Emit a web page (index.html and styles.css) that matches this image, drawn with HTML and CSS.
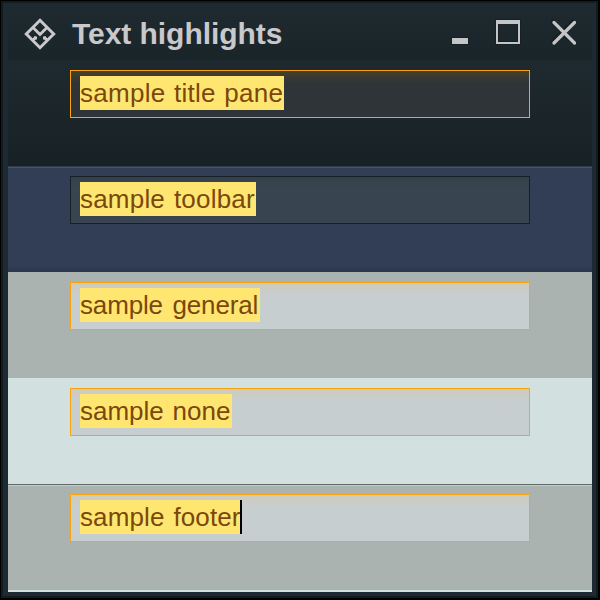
FILE: index.html
```html
<!DOCTYPE html>
<html lang="en">
<head>
<meta charset="utf-8">
<title>Text highlights</title>
<link rel="stylesheet" href="styles.css">
</head>
<body>
<div class="window">
  <div class="frame">
    <header class="titlebar">
      <svg class="logo" width="32" height="32" viewBox="0 0 32 32">
        <path d="M16 2.300 29.700 16 16 29.700 2.300 16Z" fill="none" stroke="#c9c9cb" stroke-width="3"/>
        <path d="M9 9.500 16 16.500 23 9.500M8 23l4-4M24 23l-4-4" fill="none" stroke="#c9c9cb" stroke-width="2.800"/>
        <path d="M10 18.500h3v3h-3zM19 18.500h3v3h-3z" fill="#c9c9cb"/>
      </svg>
      <h1 class="title">Text highlights</h1>
      <svg class="controls" width="128" height="32" viewBox="0 0 128 32">
        <path d="M3 19h18v8H3zM47 1h26v26H47zM51 5v18h18V5z" fill="#141a1d" fill-rule="evenodd" opacity=".6"/>
        <path d="m105 4 20 20M125 4l-20 20" fill="none" stroke="#141a1d" stroke-width="5" stroke-linecap="round" opacity=".6"/>
        <path d="M4 20h16v6H4z" fill="#c4c5c7"/>
        <path d="M48 2h24v24H48zM50 6v18h20V6z" fill="#c4c5c7" fill-rule="evenodd"/>
        <path d="m106 4.500 20.500 20.500M126.500 4.500 106 25" fill="none" stroke="#c4c5c7" stroke-width="3.200" stroke-linecap="round"/>
      </svg>
    </header>
    <section class="pane pane-title"><div class="field"><span class="mark w-title">sample title pane</span></div></section>
    <section class="pane pane-toolbar"><div class="field field-dark"><span class="mark w-toolbar">sample toolbar</span></div></section>
    <section class="pane pane-general"><div class="field"><span class="mark w-general">sample general</span></div></section>
    <section class="pane pane-none"><div class="field"><span class="mark w-none">sample none</span></div></section>
    <section class="pane pane-footer"><div class="field"><span class="mark w-footer">sample footer</span><span class="caret"></span></div></section>
  </div>
</div>
</body>
</html>
```
FILE: styles.css
```css
* { box-sizing: border-box; }
body { margin: 0; font-family: "Liberation Sans", Arial, sans-serif; }
.window {
  width: 600px;
  height: 600px;
  padding: 1px 2px 2px 1px;
  background: #000;
}
.frame {
  height: 597px;
  border: 2px solid #121d21;
  padding: 5px 4px 4px 5px;
  background: #1e2a31;
}
.titlebar {
  display: flex;
  height: 52px;
  padding: 10px 16px 0 16px;
  background: linear-gradient(#1f2a30, #1a252a);
}
.logo { flex: none; }
.title {
  margin: 0 0 0 16px;
  font-size: 30px;
  line-height: 32px;
  letter-spacing: -0.05px;
  white-space: nowrap;
  color: #c9c9cb;
}
.controls { margin-left: auto; }
.pane { height: 106px; padding: 10px 62px 0; }
.pane-title { background: linear-gradient(#1f2a30, #172125); }
.pane-toolbar {
  border-top: 1px solid #303c4d;
  padding-top: 9px;
  background: linear-gradient(#465268 0 1px, transparent 1px 98px, #2b374b), #323e56;
}
.pane-general { background: #abb3b0; }
.pane-none { background: #d2e0df; }
.pane-footer {
  border-top: 1px solid #606a6c;
  padding-top: 9px;
  background: linear-gradient(#c2cccc 0 1px, transparent 1px), #abb3b0;
  box-shadow: 0 2px #d2e0df;
}
.field {
  display: flex;
  height: 48px;
  padding: 5px 9px;
  border: 1px solid #f9a30f;
  background: linear-gradient(#cecbbb, #c7ced0 12px);
}
.pane-title .field { background: linear-gradient(#483f2c, #2e3437 12px); }
.pane-toolbar .field { border-color: #141f28; background: linear-gradient(#35414a, #38444f 12px); }
.mark {
  height: 34px;
  background: #ffe670;
  color: #7a480d;
  font-size: 26px;
  line-height: 34px;
  white-space: nowrap;
}
.w-title { width: 204px; letter-spacing: 0.28px; word-spacing: 0.9px; }
.w-toolbar { width: 176px; letter-spacing: 0.2px; word-spacing: 1.5px; }
.w-general { width: 180px; letter-spacing: -0.15px; word-spacing: 2.5px; }
.w-none { width: 152px; letter-spacing: 0; word-spacing: 1.5px; }
.w-footer { width: 160px; letter-spacing: 0.12px; word-spacing: 1.5px; }
.caret { width: 2px; height: 34px; background: #000; }
```
